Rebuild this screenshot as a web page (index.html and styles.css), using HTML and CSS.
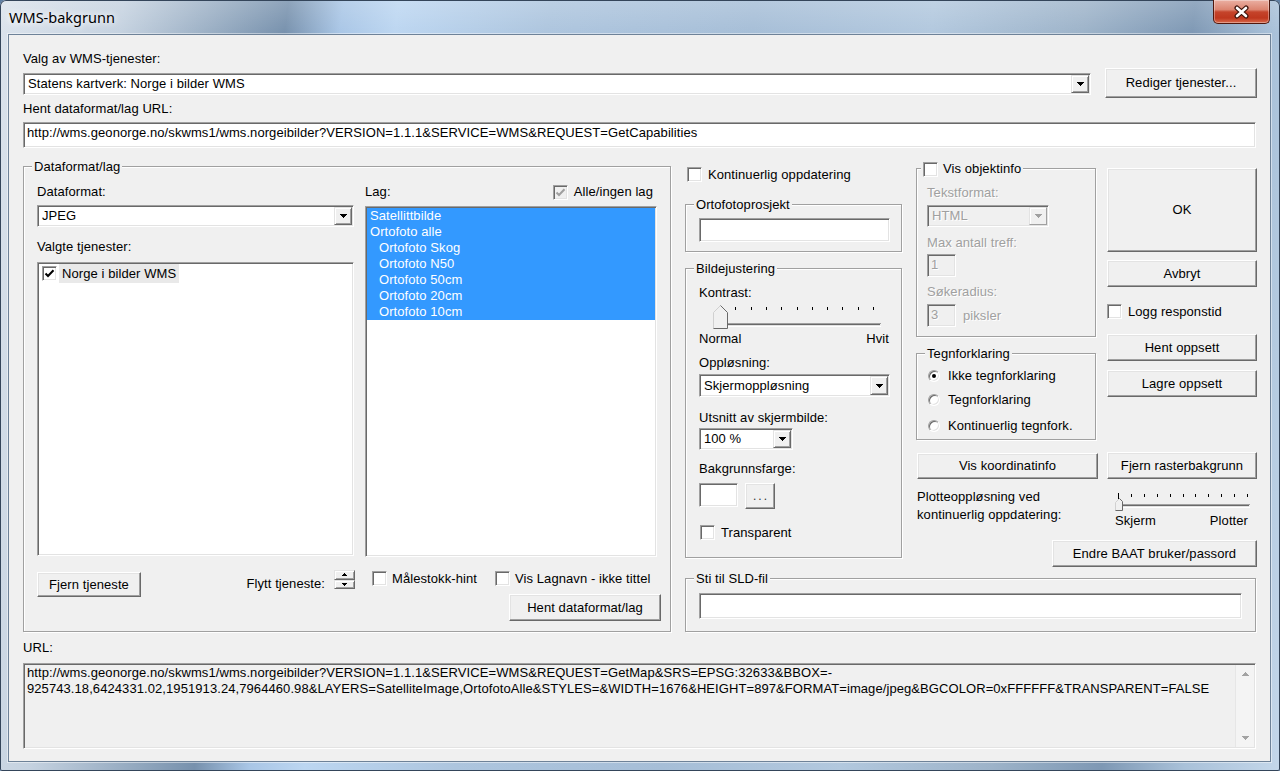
FILE: index.html
```html
<!DOCTYPE html>
<html>
<head>
<meta charset="utf-8">
<title>WMS-bakgrunn</title>
<link rel="stylesheet" href="styles.css">
</head>
<body>
<div class="window">
  <div class="titlebar">
    <div class="title">WMS-bakgrunn</div>
    <div class="close">
      <svg width="17" height="14" viewBox="0 0 17 14"><path d="M4 3 L13 11 M13 3 L4 11" stroke="#3d130b" stroke-width="5" stroke-linecap="round" fill="none"/><path d="M4 3 L13 11 M13 3 L4 11" stroke="#fff" stroke-width="2.6" stroke-linecap="round" fill="none"/></svg>
    </div>
  </div>
  <div class="client">
    <div class="lbl l-valg">Valg av WMS-tjenester:</div>
    <div class="row-service">
      <div class="combo sunken c-service"><div class="combo-text">Statens kartverk: Norge i bilder WMS</div><div class="dd"><svg width="7" height="4" viewBox="0 0 7 4"><path d="M0 0h7v1H0zM1 1h5v1H1zM2 2h3v1H2zM3 3h1v1H3z"/></svg></div></div>
      <div class="btn b-rediger">Rediger tjenester...</div>
    </div>
    <div class="lbl l-hent">Hent dataformat/lag URL:</div>
    <div class="field sunken f-url">http://wms.geonorge.no/skwms1/wms.norgeibilder?VERSION=1.1.1&amp;SERVICE=WMS&amp;REQUEST=GetCapabilities</div>

    <div class="main">
      <div class="group g-data">
        <div class="legend">Dataformat/lag</div>
        <div class="data-cols">
          <div class="data-left">
            <div class="lbl l-dataformat">Dataformat:</div>
            <div class="combo sunken c-jpeg"><div class="combo-text">JPEG</div><div class="dd"><svg width="7" height="4" viewBox="0 0 7 4"><path d="M0 0h7v1H0zM1 1h5v1H1zM2 2h3v1H2zM3 3h1v1H3z"/></svg></div></div>
            <div class="lbl l-valgte">Valgte tjenester:</div>
            <div class="list sunken list-valgte">
              <div class="svc-item">
                <span class="cb"><svg width="13" height="13" viewBox="0 0 13 13"><polyline points="2.5,6.5 5,9 10.5,3.2" fill="none" stroke="#000" stroke-width="2"/></svg></span>
                <span class="svc-text">Norge i bilder WMS</span>
              </div>
            </div>
            <div class="row-fjern">
              <div class="btn b-fjern">Fjern tjeneste</div>
              <div class="flytt">Flytt tjeneste:</div>
              <div class="spin">
                <div class="spin-btn"><svg width="5" height="3" viewBox="0 0 5 3"><path d="M2 0h1v1H2zM1 1h3v1H1zM0 2h5v1H0z"/></svg></div>
                <div class="spin-btn"><svg width="5" height="3" viewBox="0 0 5 3"><path d="M0 0h5v1H0zM1 1h3v1H1zM2 2h1v1H2z"/></svg></div>
              </div>
            </div>
          </div>
          <div class="data-right">
            <div class="row-lag">
              <div class="lbl">Lag:</div>
              <div class="chk"><span class="cb cb-dis"><svg width="13" height="13" viewBox="0 0 13 13"><polyline points="2.5,6.5 5,9 10.5,3.2" fill="none" stroke="#a0a0a0" stroke-width="2"/></svg></span><span>Alle/ingen lag</span></div>
            </div>
            <div class="list sunken list-lag">
              <div class="lag-item">Satellittbilde</div>
              <div class="lag-item">Ortofoto alle</div>
              <div class="lag-item sub">Ortofoto Skog</div>
              <div class="lag-item sub">Ortofoto N50</div>
              <div class="lag-item sub">Ortofoto 50cm</div>
              <div class="lag-item sub">Ortofoto 20cm</div>
              <div class="lag-item sub">Ortofoto 10cm</div>
            </div>
            <div class="row-hints">
              <div class="chk hint1"><span class="cb"></span><span>Målestokk-hint</span></div>
              <div class="chk hint2"><span class="cb"></span><span>Vis Lagnavn - ikke tittel</span></div>
            </div>
            <div class="btn b-hentdata">Hent dataformat/lag</div>
          </div>
        </div>
      </div>

      <div class="right-area">
        <div class="right-top">
          <div class="col2">
            <div class="chk chk-kont"><span class="cb"></span><span>Kontinuerlig oppdatering</span></div>
            <div class="group g-orto">
              <div class="legend">Ortofotoprosjekt</div>
              <div class="gbody pad13">
                <div class="field sunken f-orto"></div>
              </div>
            </div>
            <div class="group g-bilde">
              <div class="legend">Bildejustering</div>
              <div class="gbody pad13">
                <div class="lbl l-kontrast">Kontrast:</div>
                <svg class="slider1" width="191" height="30" viewBox="0 0 191 30" shape-rendering="crispEdges">
                  <rect x="21" y="4" width="1" height="6" fill="#000"/>
                  <rect x="36" y="6" width="1" height="3" fill="#000"/>
                  <rect x="52" y="6" width="1" height="3" fill="#000"/>
                  <rect x="67" y="6" width="1" height="3" fill="#000"/>
                  <rect x="82" y="6" width="1" height="3" fill="#000"/>
                  <rect x="98" y="6" width="1" height="3" fill="#000"/>
                  <rect x="113" y="6" width="1" height="3" fill="#000"/>
                  <rect x="128" y="6" width="1" height="3" fill="#000"/>
                  <rect x="143" y="6" width="1" height="3" fill="#000"/>
                  <rect x="159" y="6" width="1" height="3" fill="#000"/>
                  <rect x="174" y="6" width="1" height="3" fill="#000"/>
                  <rect x="14" y="22" width="168" height="1" fill="#a0a0a0"/>
                  <rect x="15" y="23" width="166" height="1" fill="#696969"/>
                  <rect x="15" y="24" width="166" height="1" fill="#e3e3e3"/>
                  <rect x="14" y="25" width="168" height="1" fill="#ffffff"/>
                  <polygon points="14,28 14,11 21,4 28,11 28,28" fill="#f0f0f0"/>
                  <polyline points="14.5,27.5 14.5,11.5 21.5,4.5" fill="none" stroke="#d0d0d0" shape-rendering="auto"/>
                  <polyline points="21.5,4.5 28.5,11.5 28.5,27.5 14.5,27.5" fill="none" stroke="#696969" shape-rendering="auto"/>
                </svg>
                <div class="row-nh"><span>Normal</span><span>Hvit</span></div>
                <div class="lbl l-opp">Oppløsning:</div>
                <div class="combo sunken c-skjerm"><div class="combo-text">Skjermoppløsning</div><div class="dd"><svg width="7" height="4" viewBox="0 0 7 4"><path d="M0 0h7v1H0zM1 1h5v1H1zM2 2h3v1H2zM3 3h1v1H3z"/></svg></div></div>
                <div class="lbl l-uts">Utsnitt av skjermbilde:</div>
                <div class="combo sunken c-pct"><div class="combo-text">100 %</div><div class="dd"><svg width="7" height="4" viewBox="0 0 7 4"><path d="M0 0h7v1H0zM1 1h5v1H1zM2 2h3v1H2zM3 3h1v1H3z"/></svg></div></div>
                <div class="lbl l-bak">Bakgrunnsfarge:</div>
                <div class="row-color">
                  <div class="sunken colorbox"></div>
                  <div class="btn b-dots">...</div>
                </div>
                <div class="chk chk-transp"><span class="cb"></span><span>Transparent</span></div>
              </div>
            </div>
          </div>

          <div class="col3">
            <div class="group g-obj">
              <div class="legend legend-obj"><span class="cb"></span><span>Vis objektinfo</span></div>
              <div class="gbody pad10">
                <div class="lbl dis l-tekst">Tekstformat:</div>
                <div class="combo sunken combo-dis c-html"><div class="combo-text">HTML</div><div class="dd dd-dis"><svg width="7" height="4" viewBox="0 0 7 4"><path d="M0 0h7v1H0zM1 1h5v1H1zM2 2h3v1H2zM3 3h1v1H3z" fill="#a0a0a0"/></svg></div></div>
                <div class="lbl dis l-max">Max antall treff:</div>
                <div class="field sunken field-dis f-small f-1">1</div>
                <div class="lbl dis l-sok">Søkeradius:</div>
                <div class="row-piks">
                  <div class="field sunken field-dis f-small">3</div>
                  <div class="dis piks">piksler</div>
                </div>
              </div>
            </div>
            <div class="group g-teg">
              <div class="legend">Tegnforklaring</div>
              <div class="gbody pad11">
                <div class="rad rad1"><span class="radio"><span class="dot"></span></span><span>Ikke tegnforklaring</span></div>
                <div class="rad rad2"><span class="radio"></span><span>Tegnforklaring</span></div>
                <div class="rad rad3"><span class="radio"></span><span>Kontinuerlig tegnfork.</span></div>
              </div>
            </div>
            <div class="btn b-koord">Vis koordinatinfo</div>
            <div class="plotte">Plotteoppløsning ved<br>kontinuerlig oppdatering:</div>
          </div>

          <div class="col4">
            <div class="btn b-ok">OK</div>
            <div class="btn b-std b-avbryt">Avbryt</div>
            <div class="chk chk-logg"><span class="cb"></span><span>Logg responstid</span></div>
            <div class="btn b-std b-hent">Hent oppsett</div>
            <div class="btn b-std b-lagre">Lagre oppsett</div>
            <div class="btn b-std b-fjernr">Fjern rasterbakgrunn</div>
            <svg class="slider2" width="150" height="31" viewBox="0 0 150 31" shape-rendering="crispEdges">
              <rect x="11" y="11" width="1" height="6" fill="#000"/>
              <rect x="24" y="12" width="1" height="3" fill="#000"/>
              <rect x="37" y="12" width="1" height="3" fill="#000"/>
              <rect x="50" y="12" width="1" height="3" fill="#000"/>
              <rect x="63" y="12" width="1" height="3" fill="#000"/>
              <rect x="76" y="12" width="1" height="3" fill="#000"/>
              <rect x="88" y="12" width="1" height="3" fill="#000"/>
              <rect x="101" y="12" width="1" height="3" fill="#000"/>
              <rect x="114" y="12" width="1" height="3" fill="#000"/>
              <rect x="127" y="12" width="1" height="3" fill="#000"/>
              <rect x="140" y="12" width="1" height="3" fill="#000"/>
              <rect x="10" y="22" width="133" height="1" fill="#a0a0a0"/>
              <rect x="11" y="23" width="131" height="1" fill="#696969"/>
              <rect x="11" y="24" width="131" height="1" fill="#e3e3e3"/>
              <rect x="10" y="25" width="133" height="1" fill="#ffffff"/>
              <polygon points="8,29 8,20 12,16 16,20 16,29" fill="#f0f0f0"/>
              <polyline points="8.5,28.5 8.5,20.5 12.5,16.5" fill="none" stroke="#d0d0d0" shape-rendering="auto"/>
              <polyline points="12.5,16.5 15.5,19.5 15.5,28.5 8.5,28.5" fill="none" stroke="#696969" shape-rendering="auto"/>
            </svg>
            <div class="row-sp"><span>Skjerm</span><span>Plotter</span></div>
            <div class="btn b-std b-baat">Endre BAAT bruker/passord</div>
          </div>
        </div>

        <div class="group g-sld">
          <div class="legend">Sti til SLD-fil</div>
          <div class="gbody pad13">
            <div class="field sunken f-sld"></div>
          </div>
        </div>
      </div>
    </div>

    <div class="lbl l-url">URL:</div>
    <div class="urlbox sunken">
      <div class="urltext">http://wms.geonorge.no/skwms1/wms.norgeibilder?VERSION=1.1.1&amp;SERVICE=WMS&amp;REQUEST=GetMap&amp;SRS=EPSG:32633&amp;BBOX=-<br>925743.18,6424331.02,1951913.24,7964460.98&amp;LAYERS=SatelliteImage,OrtofotoAlle&amp;STYLES=&amp;WIDTH=1676&amp;HEIGHT=897&amp;FORMAT=image/jpeg&amp;BGCOLOR=0xFFFFFF&amp;TRANSPARENT=FALSE</div>
      <div class="vscroll">
        <svg width="7" height="4" viewBox="0 0 7 4"><path d="M3 0h1v1H3zM2 1h3v1H2zM1 2h5v1H1zM0 3h7v1H0z" fill="#a3a3a3"/></svg>
        <svg width="7" height="4" viewBox="0 0 7 4"><path d="M0 0h7v1H0zM1 1h5v1H1zM2 2h3v1H2zM3 3h1v1H3z" fill="#a3a3a3"/></svg>
      </div>
    </div>
  </div>
</div>
</body>
</html>
```
FILE: styles.css
```css
* { box-sizing: border-box; }
html, body { margin: 0; padding: 0; }
body {
  width: 1280px;
  height: 771px;
  overflow: hidden;
  background: #5f7fa3;
  font-family: "Liberation Sans", Arial, sans-serif;
  font-size: 13px;
  line-height: 16px;
  letter-spacing: 0.08px;
  color: #000;
}
.window {
  width: 1280px;
  height: 771px;
  border-radius: 6px 6px 2px 2px;
  overflow: hidden;
  background:
    linear-gradient(to bottom, rgba(255,255,255,0.18), rgba(255,255,255,0) 34px),
    linear-gradient(97deg, #dbe3ec 0%, #c5d2e0 9%, #91a7be 17%, #7791ad 21%, #a9c6e6 25%, #bcd6f1 29%, #adc5de 40%, #a6bed7 55%, #b2c8de 68%, #9db3c9 79%, #7e98b4 87%, #a9c1d9 93%, #c4d7ea 100%);
  box-shadow: inset 0 0 0 1px #34455a;
}

/* title bar */
.titlebar { display: flex; align-items: flex-start; height: 34px; }
.title {
  margin: 7px 0 0 9px;
  font-family: "Noto Sans", "Open Sans", sans-serif;
  font-size: 14.5px;
  line-height: 20px;
  letter-spacing: 0;
  color: #000;
  text-shadow: 0 0 6px #fff, 0 0 10px rgba(255,255,255,0.85);
}
.close {
  margin-left: auto;
  margin-right: 10px;
  width: 57px;
  height: 24px;
  border: 1px solid #51170c;
  border-top: none;
  border-radius: 0 0 5px 5px;
  background: linear-gradient(to bottom, #eab0a3 0%, #dc8470 42%, #c5442b 52%, #bf371e 78%, #d8694b 100%);
  box-shadow: inset 0 0 0 1px rgba(255,255,255,0.35);
  display: flex;
  align-items: center;
  justify-content: center;
}

/* client */
.client {
  margin-left: 8px;
  width: 1263px;
  height: 728px;
  background: #f0f0f0;
  border: 1px solid #6e8298;
  box-shadow: 0 0 0 1px rgba(255,255,255,0.45);
  padding: 0 13px 0 14px;
  display: flex;
  flex-direction: column;
  align-items: flex-start;
}
.lbl { height: 16px; white-space: nowrap; }
.dis { color: #a0a0a0; text-shadow: 1px 1px 0 #fff; }

/* 3D primitives */
.sunken {
  border: 1px solid;
  border-color: #a0a0a0 #fff #fff #a0a0a0;
  box-shadow: inset 1px 1px 0 #696969, inset -1px -1px 0 #e3e3e3;
  background: #fff;
}
.btn {
  border: 1px solid;
  border-color: #fff #696969 #696969 #fff;
  box-shadow: inset -1px -1px 0 #a0a0a0, inset 1px 1px 0 #e3e3e3;
  background: #f0f0f0;
  display: flex;
  align-items: center;
  justify-content: center;
  white-space: nowrap;
  flex: none;
}
.group {
  border: 1px solid #a0a0a0;
  box-shadow: 1px 1px 0 #fff, inset 1px 1px 0 #fff;
  display: flex;
  flex-direction: column;
  align-items: flex-start;
  flex: none;
}
.legend {
  margin: -8px 0 0 8px;
  padding: 0 2px;
  height: 16px;
  background: #f0f0f0;
  white-space: nowrap;
  display: flex;
  align-items: center;
}
.gbody { display: flex; flex-direction: column; align-items: flex-start; }
.pad13 { padding-left: 13px; }
.pad10 { padding-left: 10px; }
.pad11 { padding-left: 11px; }

.combo { display: flex; padding: 1px; flex: none; }
.combo-text { flex: 1; padding-left: 3px; white-space: nowrap; overflow: hidden; }
.dd {
  width: 18px;
  border: 1px solid;
  border-color: #e3e3e3 #696969 #696969 #e3e3e3;
  box-shadow: inset 1px 1px 0 #fff, inset -1px -1px 0 #a0a0a0;
  background: #f0f0f0;
  display: flex;
  align-items: center;
  justify-content: center;
}
.dd svg, .vscroll svg, .spin-btn svg { display: block; }
.combo-dis { background: #f0f0f0; color: #a0a0a0; text-shadow: 1px 1px 0 #fff; }

.field { padding: 2px 2px 0 3px; line-height: 16px; white-space: nowrap; overflow: hidden; flex: none; }
.field-dis { background: #f0f0f0; color: #a0a0a0; text-shadow: 1px 1px 0 #fff; }

.cb {
  width: 15px;
  height: 15px;
  flex: none;
  border: 1px solid;
  border-color: #a0a0a0 #fff #fff #a0a0a0;
  box-shadow: inset 1px 1px 0 #696969, inset -1px -1px 0 #e3e3e3;
  background: #fff;
  display: flex;
  align-items: center;
  justify-content: center;
}
.cb svg { display: block; }
.cb-dis { background: #f0f0f0; }
.chk { display: flex; align-items: center; white-space: nowrap; height: 15px; }
.chk .cb { margin-right: 6px; }

.radio {
  width: 12px;
  height: 12px;
  flex: none;
  border-radius: 50%;
  background: #fff;
  border: 1px solid;
  border-color: #a0a0a0 #fff #fff #a0a0a0;
  box-shadow: inset 1px 1px 0 #696969, inset -1px -1px 0 #e3e3e3;
  display: flex;
  align-items: center;
  justify-content: center;
}
.dot { width: 4px; height: 4px; border-radius: 50%; background: #000; }

/* top section */
.l-valg { margin-top: 16px; }
.row-service { margin-top: 1px; height: 30px; display: flex; align-items: flex-start; }
.c-service { margin-top: 5px; width: 1068px; height: 22px; line-height: 18px; }
.b-rediger { margin-left: 14px; width: 152px; height: 30px; }
.l-hent { margin-top: 3px; }
.f-url { margin-top: 5px; width: 1233px; height: 26px; }

/* main */
.main { margin-top: 10px; height: 474px; display: flex; align-items: flex-start; }
.g-data { margin-top: 8px; width: 648px; height: 466px; }
.data-cols { display: flex; align-items: flex-start; padding-left: 13px; }
.data-left { width: 318px; display: flex; flex-direction: column; align-items: flex-start; }
.l-dataformat { margin-top: 9px; }
.c-jpeg { margin-top: 5px; width: 317px; height: 22px; line-height: 18px; }
.l-valgte { margin-top: 12px; }
.list { flex: none; padding: 1px; overflow: hidden; }
.list-valgte { margin-top: 7px; width: 317px; height: 294px; }
.svc-item { height: 19px; display: flex; align-items: center; }
.svc-item .cb { margin-left: 3px; }
.svc-text { margin-left: 2px; padding: 0 3px; line-height: 19px; background: #e9e9e9; white-space: nowrap; }
.row-fjern { margin-top: 14px; width: 318px; display: flex; align-items: flex-start; }
.b-fjern { margin-top: 2px; width: 104px; height: 25px; }
.flytt { margin-left: auto; margin-top: 6px; white-space: nowrap; }
.spin { margin-left: 9px; width: 21px; height: 19px; display: flex; flex-direction: column; flex: none; }
.spin-btn {
  flex: 1;
  border: 1px solid;
  border-color: #e3e3e3 #696969 #696969 #e3e3e3;
  box-shadow: inset 1px 1px 0 #fff, inset -1px -1px 0 #a0a0a0;
  background: #f0f0f0;
  display: flex;
  align-items: center;
  justify-content: center;
}

.data-right { margin-left: 10px; width: 292px; display: flex; flex-direction: column; align-items: flex-start; }
.row-lag { margin-top: 9px; width: 292px; height: 16px; display: flex; align-items: center; justify-content: space-between; padding-right: 4px; }
.list-lag { margin-top: 6px; width: 292px; height: 351px; }
.lag-item { height: 16px; line-height: 16px; padding-left: 3px; background: #3399ff; color: #fff; white-space: nowrap; }
.lag-item.sub { padding-left: 12px; }
.row-hints { margin-top: 14px; height: 15px; display: flex; align-items: center; padding-left: 7px; }
.row-hints .cb { margin-right: 5px; }
.hint1 { width: 123px; }
.b-hentdata { margin-top: 8px; align-self: flex-end; margin-right: -4px; width: 152px; height: 27px; }

/* right area */
.right-area { margin-left: 14px; width: 572px; display: flex; flex-direction: column; align-items: flex-start; }
.right-top { height: 409px; display: flex; align-items: flex-start; }

.col2 { width: 217px; display: flex; flex-direction: column; align-items: flex-start; }
.chk-kont { margin: 9px 0 0 2px; }
.g-orto { margin-top: 22px; width: 217px; height: 48px; }
.f-orto { margin-top: 5px; width: 191px; height: 24px; }
.g-bilde { margin-top: 16px; width: 217px; height: 290px; }
.l-kontrast { margin-top: 8px; }
.slider1 { display: block; }
.row-nh { width: 190px; height: 16px; display: flex; justify-content: space-between; }
.l-opp { margin-top: 8px; }
.c-skjerm { margin-top: 3px; width: 191px; height: 23px; line-height: 19px; }
.l-uts { margin-top: 13px; }
.c-pct { margin-top: 2px; width: 94px; height: 22px; line-height: 18px; }
.l-bak { margin-top: 11px; }
.row-color { margin-top: 6px; height: 26px; display: flex; align-items: flex-start; }
.colorbox { width: 39px; height: 24px; }
.b-dots { margin-left: 7px; width: 30px; height: 26px; letter-spacing: 2px; padding-left: 2px; font-size: 12px; color: #333; }
.chk-transp { margin: 16px 0 0 1px; }

.col3 { margin-left: 14px; width: 180px; display: flex; flex-direction: column; align-items: flex-start; }
.g-obj { margin-top: 10px; width: 180px; height: 169px; }
.legend-obj { margin-left: 4px; }
.legend-obj .cb { margin-right: 5px; }
.l-tekst { margin-top: 8px; }
.c-html { margin-top: 4px; width: 122px; height: 22px; line-height: 18px; }
.dd-dis { border-color: #e3e3e3 #a0a0a0 #a0a0a0 #e3e3e3; box-shadow: inset 1px 1px 0 #fff; }
.l-max { margin-top: 8px; }
.f-small { width: 29px; height: 23px; padding-top: 2px; }
.f-1 { margin-top: 3px; }
.l-sok { margin-top: 7px; }
.row-piks { margin-top: 4px; display: flex; align-items: center; }
.piks { margin-left: 7px; }
.g-teg { margin-top: 16px; width: 180px; height: 87px; }
.rad { height: 16px; display: flex; align-items: center; white-space: nowrap; }
.rad .radio { margin-right: 8px; }
.rad1 { margin-top: 6px; }
.rad2 { margin-top: 8px; }
.rad3 { margin-top: 10px; }
.b-koord { margin: 13px 0 0 1px; width: 181px; height: 26px; }
.plotte { margin: 9px 0 0 1px; line-height: 18px; white-space: nowrap; }

.col4 { margin-left: 11px; width: 150px; display: flex; flex-direction: column; align-items: flex-start; }
.b-ok { margin-top: 10px; width: 150px; height: 84px; }
.b-std { width: 150px; height: 27px; }
.b-avbryt { margin-top: 8px; }
.chk-logg { margin-top: 17px; }
.b-hent { margin-top: 15px; }
.b-lagre { margin-top: 9px; }
.b-fjernr { margin-top: 55px; }
.slider2 { display: block; margin-top: 3px; }
.row-sp { width: 150px; height: 16px; display: flex; justify-content: space-between; padding: 0 9px 0 8px; }
.b-baat { margin: 11px 0 0 -55px; width: 205px; }

.g-sld { margin-top: 11px; width: 571px; height: 54px; }
.f-sld { margin-top: 6px; width: 543px; height: 26px; }

/* URL */
.l-url { margin-top: 8px; }
.urlbox { margin-top: 7px; width: 1233px; height: 86px; background: #f0f0f0; display: flex; padding: 1px; }
.urltext { flex: 1; padding: 0 0 0 2px; line-height: 16px; white-space: nowrap; overflow: hidden; }
.vscroll {
  width: 19px;
  background: #f4f4f4;
  border-left: 1px solid #e6e6e6;
  display: flex;
  flex-direction: column;
  justify-content: space-between;
  align-items: center;
  padding: 7px 0 7px;
}
```
